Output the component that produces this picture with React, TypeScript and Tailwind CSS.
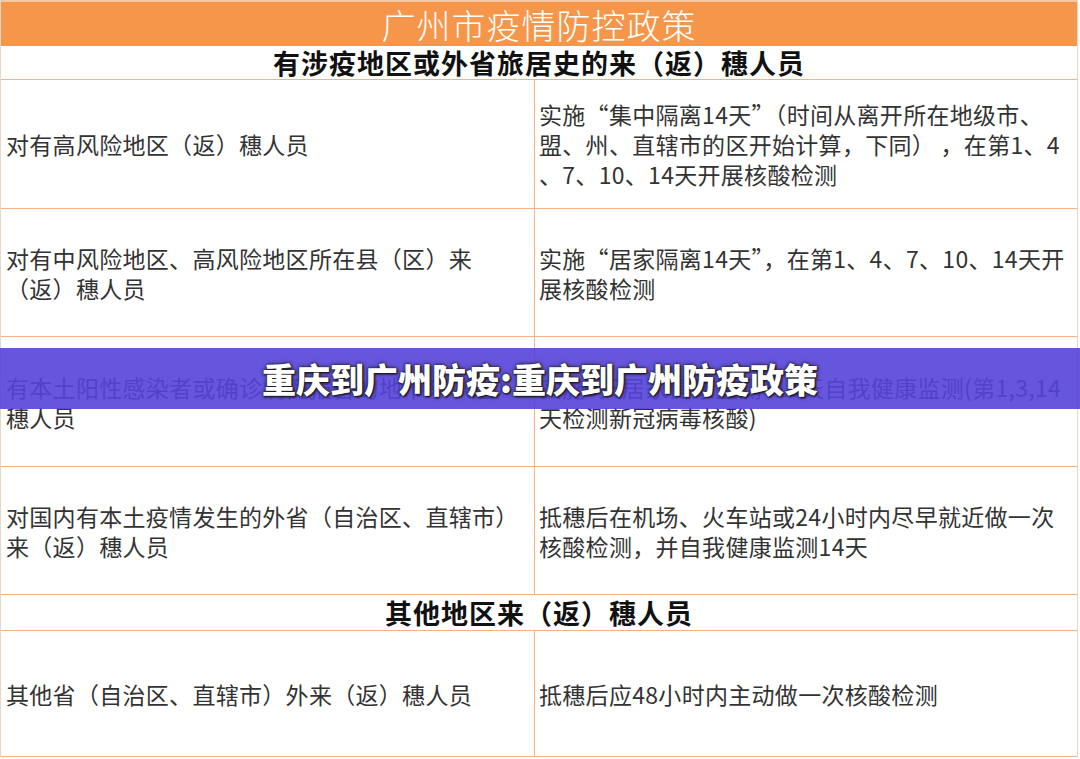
import React from "react";

const font = { fontFamily: '"Noto Sans CJK SC", "Noto Sans", sans-serif' };

function Row({ h, left, right }: { h: string; left: React.ReactNode; right: React.ReactNode }) {
  return (
    <div className={`flex border-b border-[#f4b183] ${h}`}>
      <div className="w-[534px] shrink-0 border-r border-[#f4b183] flex items-center pl-[5px] text-[23px] leading-[30px] text-[#333] whitespace-nowrap tracking-[0.3px]">
        <div>{left}</div>
      </div>
      <div className="flex-1 flex items-center pl-[4px] text-[23px] leading-[30px] text-[#333] whitespace-nowrap tracking-[0.3px] overflow-hidden">
        <div>{right}</div>
      </div>
    </div>
  );
}

export default function App() {
  return (
    <div className="relative w-[1080px] h-[759px] bg-white overflow-hidden" style={font}>
      <div className="w-[1078px] border-l border-r border-[#e8d6c8]">
        <div className="h-[46px] bg-[#f5964a] border-t-2 border-[#f8c9a0] flex items-center justify-center text-white text-[34px] leading-none font-light tracking-[1px] pt-[2px]">
          广州市疫情防控政策
        </div>
        <div className="h-[34px] border-b border-[#f4b183] flex items-center justify-center text-[27px] leading-none font-bold text-[#111] tracking-[1px]">
          有涉疫地区或外省旅居史的来（返）穗人员
        </div>
        <Row
          h="h-[129px]"
          left={<>对有高风险地区（返）穗人员</>}
          right={
            <>
              实施“集中隔离14天”（时间从离开所在地级市、
              <br />
              盟、州、直辖市的区开始计算，下同） ，在第1、4
              <br />
              、7、10、14天开展核酸检测
            </>
          }
        />
        <Row
          h="h-[128px]"
          left={
            <>
              对有中风险地区、高风险地区所在县（区）来
              <br />
              （返）穗人员
            </>
          }
          right={
            <>
              实施“居家隔离14天”，在第1、4、7、10、14天开
              <br />
              展核酸检测
            </>
          }
        />
        <Row
          h="h-[130px]"
          left={
            <>
              有本土阳性感染者或确诊病例报告的地市来（返）
              <br />
              穗人员
            </>
          }
          right={
            <>
              实施3天居家健康监测+11天自我健康监测(第1,3,14
              <br />
              天检测新冠病毒核酸)
            </>
          }
        />
        <Row
          h="h-[128px]"
          left={
            <>
              对国内有本土疫情发生的外省（自治区、直辖市）
              <br />
              来（返）穗人员
            </>
          }
          right={
            <>
              抵穗后在机场、火车站或24小时内尽早就近做一次
              <br />
              核酸检测，并自我健康监测14天
            </>
          }
        />
        <div className="h-[36px] border-b border-[#f4b183] flex items-center justify-center text-[27px] leading-none font-bold text-[#111] tracking-[1px]">
          其他地区来（返）穗人员
        </div>
        <Row
          h="h-[126px]"
          left={<>其他省（自治区、直辖市）外来（返）穗人员</>}
          right={<>抵穗后应48小时内主动做一次核酸检测</>}
        />
      </div>
      <div className="absolute left-0 top-[348px] w-full h-[61px] bg-[rgba(85,66,217,0.9)] flex items-center justify-center">
        <span className="text-white text-[34px] leading-none font-black tracking-[0px] [text-shadow:0_0_2px_#222,0_0_4px_#222,1px_1px_2px_#000]">
          重庆到广州防疫:重庆到广州防疫政策
        </span>
      </div>
    </div>
  );
}
